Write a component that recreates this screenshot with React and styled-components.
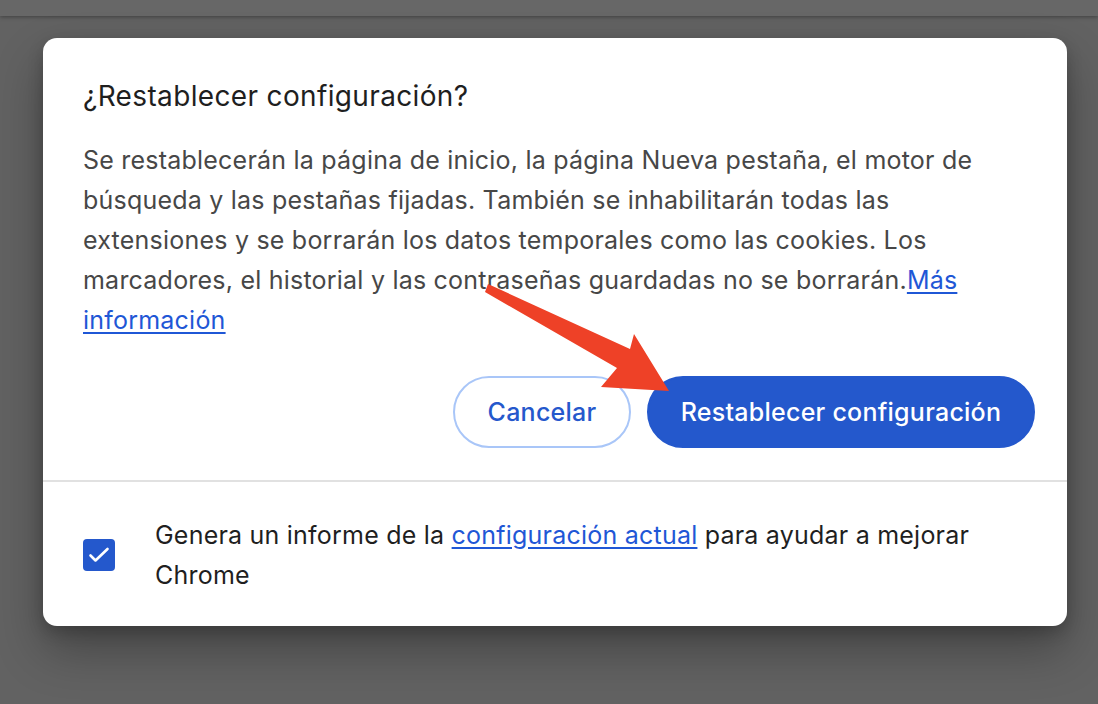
import React from "react";
import styled, { createGlobalStyle } from "styled-components";

const GlobalStyle = createGlobalStyle`
  html, body {
    margin: 0;
    padding: 0;
    background: #646464;
    font-family: Inter, "Noto Sans", "Liberation Sans", sans-serif;
  }
`;

const App = () => {
  return (
    <>
      <GlobalStyle />
      <Page>
        <TopBar />
        <Dialog>
          <Title>¿Restablecer configuración?</Title>
          <Body>
            Se restablecerán la página de inicio, la página Nueva pestaña, el motor de
            <br />
            búsqueda y las pestañas fijadas. También se inhabilitarán todas las
            <br />
            extensiones y se borrarán los datos temporales como las cookies. Los
            <br />
            marcadores, el historial y las contraseñas guardadas no se borrarán.
            <Link href="#">Más</Link>
            <br />
            <Link href="#">información</Link>
          </Body>
          <Actions>
            <Button>Cancelar</Button>
            <Button primary>Restablecer configuración</Button>
          </Actions>
          <Divider />
          <Footer>
            <Checkbox>
              <svg width="24" height="24" viewBox="0 0 24 24">
                <path
                  d="M3.5 12.5l5 5 12-11.5"
                  fill="none"
                  stroke="#fff"
                  strokeWidth="2.6"
                  strokeLinecap="round"
                  strokeLinejoin="round"
                />
              </svg>
            </Checkbox>
            <FooterText>
              Genera un informe de la <Link href="#">configuración actual</Link> para ayudar a mejorar
              <br />
              Chrome
            </FooterText>
          </Footer>
        </Dialog>
        <Arrow width="1098" height="704" viewBox="0 0 1098 704">
          <polygon
            points="488,284 630,349 634,334 669,391 601,387 617,368 485,292"
            fill="#ee4127"
            strokeLinejoin="round"
          />
        </Arrow>
      </Page>
    </>
  );
};

// styled components
const Page = styled.div`
  position: relative;
  width: 1098px;
  height: 704px;
  overflow: hidden;
  background: #626262;
`;

const TopBar = styled.div`
  height: 16px;
  background: #676767;
  box-shadow: 0 1px 4px rgba(0, 0, 0, 0.35);
`;

const Dialog = styled.div`
  margin: 22px 0 0 43px;
  width: 1024px;
  height: 588px;
  box-sizing: border-box;
  background: #ffffff;
  border-radius: 14px;
  box-shadow: 0 24px 48px rgba(0, 0, 0, 0.3), 0 6px 16px rgba(0, 0, 0, 0.2);
  padding-top: 42px;
  display: flex;
  flex-direction: column;
`;

const Title = styled.h1`
  margin: 0 40px;
  font-size: 28px;
  line-height: 32px;
  font-weight: 400;
  letter-spacing: 0.35px;
  color: #1f1f1f;
`;

const Body = styled.p`
  margin: 28px 40px 0;
  font-size: 25px;
  line-height: 40px;
  letter-spacing: 0.22px;
  color: #474747;
  white-space: nowrap;
`;

const Link = styled.a`
  color: #1f57d6;
  text-decoration: underline;
  text-underline-offset: 3px;
`;

const Actions = styled.div`
  display: flex;
  justify-content: flex-end;
  gap: 16px;
  margin: 36px 32px 32px 0;
`;

const Button = styled.button`
  height: 72px;
  padding: 0 30px;
  min-width: ${(p) => (p.primary ? "388px" : "178px")};
  border-radius: 36px;
  box-sizing: border-box;
  font-family: inherit;
  font-size: 25px;
  font-weight: 500;
  letter-spacing: 0.25px;
  cursor: pointer;
  color: ${(p) => (p.primary ? "#ffffff" : "#2558cc")};
  background: ${(p) => (p.primary ? "#2458cc" : "#ffffff")};
  border: 2px solid ${(p) => (p.primary ? "#2458cc" : "#a9c6f8")};
`;

const Divider = styled.div`
  height: 2px;
  background: #e1e1e1;
`;

const Footer = styled.div`
  display: flex;
  align-items: center;
  gap: 40px;
  padding: 33px 40px 0;
`;

const Checkbox = styled.div`
  width: 32px;
  height: 32px;
  flex: none;
  border-radius: 4px;
  background: #2458cc;
  display: flex;
  align-items: center;
  justify-content: center;
`;

const FooterText = styled.div`
  font-size: 25px;
  line-height: 40px;
  letter-spacing: 0.22px;
  color: #1f1f1f;
  white-space: nowrap;
`;

const Arrow = styled.svg`
  position: absolute;
  left: 0;
  top: 0;
  pointer-events: none;
`;

export default App;
